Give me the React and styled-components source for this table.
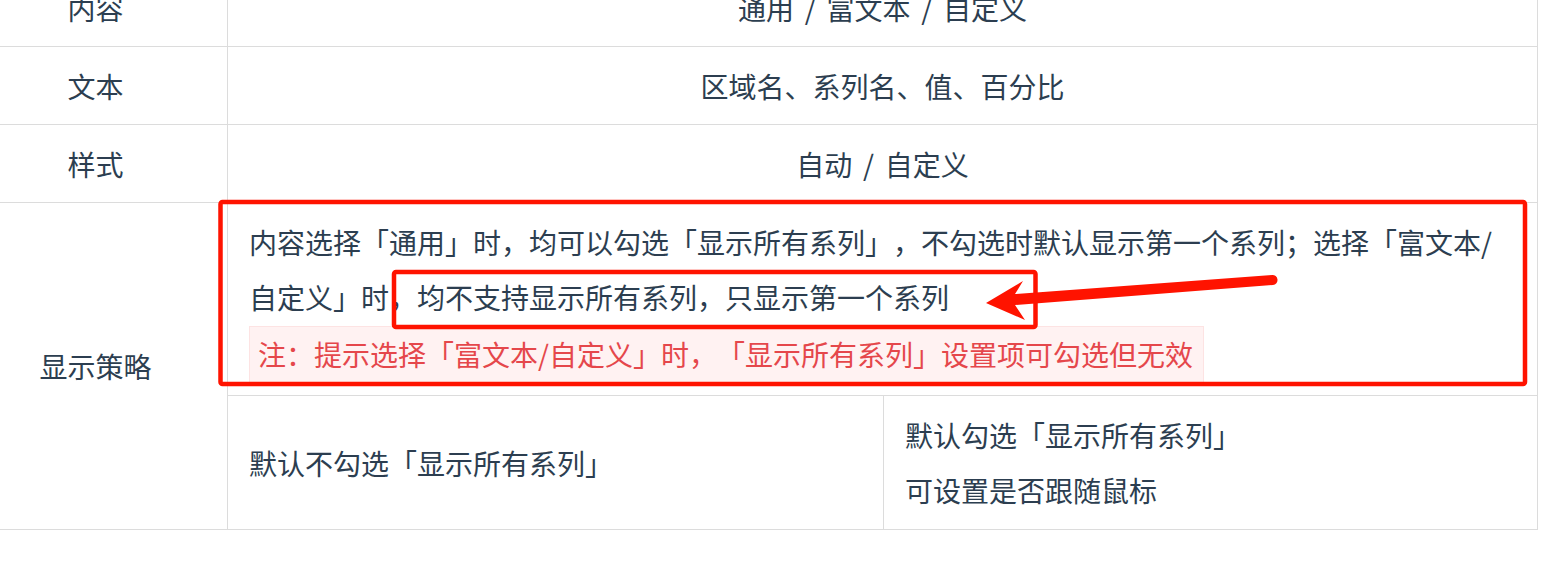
import React from 'react';
import styled, { createGlobalStyle } from 'styled-components';

const GlobalStyle = createGlobalStyle`
  html, body {
    margin: 0;
    padding: 0;
    background: #fff;
  }
  body {
    font-family: "Noto Sans CJK SC", "Noto Sans", sans-serif;
    color: #2c3e50;
    text-spacing-trim: space-all;
    font-feature-settings: "halt" 0, "chws" 0;
  }
`;

const rows = [
  { label: '内容', value: '通用 / 富文本 / 自定义' },
  { label: '文本', value: '区域名、系列名、值、百分比' },
  { label: '样式', value: '自动 / 自定义' },
];

const App = () => {
  return (
    <Page>
      <GlobalStyle />
      <Table>
        {rows.map(row => (
          <Row key={row.label}>
            <Label>{row.label}</Label>
            <Value>{row.value}</Value>
          </Row>
        ))}
        <Row>
          <Label>显示策略</Label>
          <Stack>
            <Desc>
              <p>
                内容选择「通用」时，均可以勾选「显示所有系列」，不勾选时默认显示第一个系列；选择「富文本/自定义」时，均不支持显示所有系列，只显示第一个系列
              </p>
              <Note>注：提示选择「富文本/自定义」时，「显示所有系列」设置项可勾选但无效</Note>
            </Desc>
            <SubGrid>
              <SubCell center>默认不勾选「显示所有系列」</SubCell>
              <SubCell>
                <div>默认勾选「显示所有系列」</div>
                <div>可设置是否跟随鼠标</div>
              </SubCell>
            </SubGrid>
          </Stack>
        </Row>
      </Table>

      {/* annotation marks drawn on top of the screenshot */}
      <Marks width="1544" height="564" viewBox="0 0 1544 564">
        <rect x="220.5" y="202" width="1304.5" height="182" rx="2" fill="none" stroke="#ff1300" strokeWidth="4.5" />
        <rect x="394" y="272" width="641.5" height="55" rx="2" fill="none" stroke="#ff1300" strokeWidth="4.5" />
        <path
          d="M986 303 L1023 281 L1015 294 L1272 275 A5 5 0 0 1 1273 285 L1015 305 L1025 320 Z"
          fill="#ff1300"
        />
      </Marks>
    </Page>
  );
};

export default App;

const Page = styled.div`
  position: relative;
  width: 1544px;
  height: 564px;
  overflow: hidden;
  background: #fff;
`;

const Table = styled.div`
  width: 1537px;
  margin-top: -31px;
  border-right: 1px solid #dcdcdc;
  font-size: 28px;
`;

const Row = styled.div`
  display: grid;
  grid-template-columns: 228px 1fr;
  border-bottom: 1px solid #dcdcdc;
`;

const Label = styled.div`
  display: flex;
  align-items: center;
  justify-content: center;
  padding-right: 36px;
  border-right: 1px solid #dcdcdc;
  line-height: 42px;
`;

const Value = styled.div`
  display: flex;
  align-items: center;
  justify-content: center;
  min-height: 77px;
  padding: 0 21px;
  line-height: 42px;
  word-spacing: 4.5px;
`;

const Stack = styled.div`
  display: flex;
  flex-direction: column;
`;

const Desc = styled.div`
  padding: 12px 30px 12px 21px;
  line-height: 55px;

  p {
    margin: 0;
  }
`;

const Note = styled.div`
  width: fit-content;
  margin-top: 1px;
  padding: 0 10px 0 8px;
  border: 1px solid #fde3e3;
  background: #fff2f2;
  color: #e5474b;
`;

const SubGrid = styled.div`
  display: grid;
  grid-template-columns: 656px 1fr;
  border-top: 1px solid #dcdcdc;
`;

const SubCell = styled.div`
  display: flex;
  flex-direction: column;
  justify-content: ${p => (p.center ? 'center' : 'flex-start')};
  padding: 12px 21px 11px;
  line-height: 55px;

  &:first-child {
    border-right: 1px solid #dcdcdc;
  }
`;

const Marks = styled.svg`
  position: absolute;
  top: 0;
  left: 0;
  pointer-events: none;
`;
